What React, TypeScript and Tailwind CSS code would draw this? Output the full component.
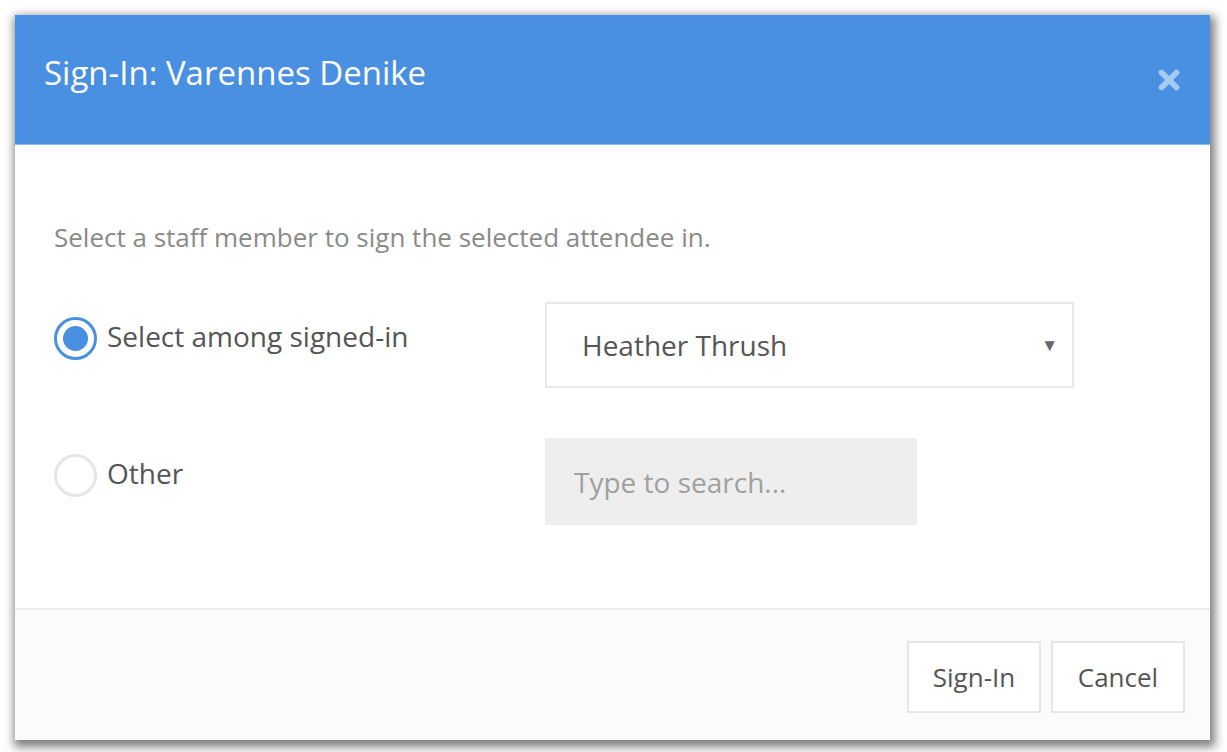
import React, { useState } from "react";
import { X } from "lucide-react";

const font = { fontFamily: '"Open Sans", "Noto Sans", sans-serif' };

function Radio({ checked }: { checked: boolean }) {
  return (
    <span
      className={
        checked
          ? "flex size-[43px] shrink-0 items-center justify-center rounded-full border-[3px] border-[#4a90e2] bg-white"
          : "flex size-[43px] shrink-0 items-center justify-center rounded-full border-[3px] border-[#e6e6e6] bg-white"
      }
    >
      {checked && <span className="size-[25px] rounded-full bg-[#4a90e2]" />}
    </span>
  );
}

export default function App() {
  const [mode, setMode] = useState<"signed" | "other">("signed");
  return (
    <div className="h-[752px] w-[1227px] bg-white p-[15px]" style={font}>
      <div className="flex h-[725px] w-[1195px] flex-col bg-white shadow-[2px_4px_9px_3px_rgba(0,0,0,0.5)]">
        <div className="flex h-[130px] items-center justify-between border-b border-[#8fb8ec] bg-[#4a90e2] pr-[26px] pl-[29px]">
          <h1 className="pb-[14px] text-[33px] font-normal text-white">
            Sign-In: Varennes Denike
          </h1>
          <X className="size-[30px] text-[#a6c9f2]" strokeWidth={4.5} />
        </div>

        <div className="flex-1 px-[39px] pt-[74px]">
          <p className="text-[26px] leading-[36px] text-[#8a8a8a]">
            Select a staff member to sign the selected attendee in.
          </p>

          <div className="mt-[47px] grid grid-cols-[491px_1fr] gap-y-[50px]">
            <button
              className="flex items-center gap-[10px] self-start pt-[14px]"
              onClick={() => setMode("signed")}
            >
              <Radio checked={mode === "signed"} />
              <span className="pb-[4px] text-[28px] leading-[40px] text-[#555]">
                Select among signed-in
              </span>
            </button>
            <div className="flex h-[86px] w-[529px] items-center justify-between border-2 border-[#e8e8e8] bg-white pr-[14px] pl-[35px]">
              <span className="text-[28px] text-[#555]">Heather Thrush</span>
              <span className="text-[17px] text-[#666]">▼</span>
            </div>

            <button
              className="flex items-center gap-[10px] self-start pt-[15px]"
              onClick={() => setMode("other")}
            >
              <Radio checked={mode === "other"} />
              <span className="pb-[5px] text-[28px] leading-[40px] text-[#555]">Other</span>
            </button>
            <input
              className="h-[87px] w-[372px] bg-[#eeeeee] px-[29px] text-[28px] text-[#555] outline-none placeholder:text-[#a0a0a0]"
              placeholder="Type to search..."
            />
          </div>
        </div>

        <div className="flex h-[132px] items-start justify-end gap-[10px] border-t-2 border-[#ebebeb] bg-[#fbfbfb] pt-[31px] pr-[25px]">
          <button className="h-[72px] w-[134px] border-2 border-[#e6e6e6] bg-white text-[26px] text-[#555]">
            Sign-In
          </button>
          <button className="h-[72px] w-[134px] border-2 border-[#e6e6e6] bg-white text-[26px] text-[#555]">
            Cancel
          </button>
        </div>
      </div>
    </div>
  );
}
